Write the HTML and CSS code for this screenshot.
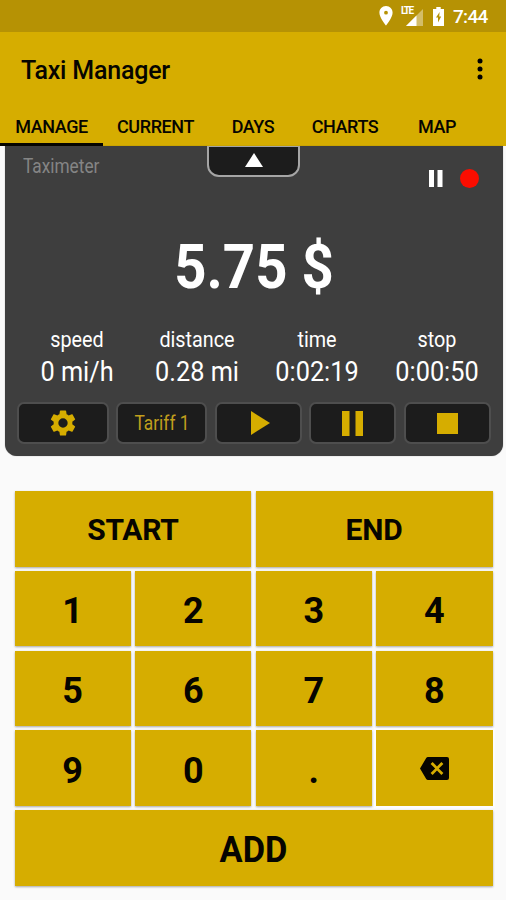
FILE: index.html
```html
<!DOCTYPE html>
<html lang="en">
<head>
<meta charset="utf-8">
<title>Taxi Manager</title>
<link rel="stylesheet" href="styles.css">
</head>
<body>
<div class="status">
  <svg class="pin" viewBox="0 0 14 20"><path fill-rule="evenodd" d="M7 0C3.100 0 .4 3 .4 6.700C.4 11.500 7 19.500 7 19.500S13.600 11.500 13.600 6.700C13.600 3 10.900 0 7 0ZM7 4.800a1.900 1.900 0 1 1 0 3.800a1.900 1.900 0 1 1 0-3.800Z"/></svg>
  <div class="signal"><span class="lte">LTE</span><svg viewBox="0 0 17 17"><path opacity=".4" d="M17 0V17H0Z"/><path d="M10.500 6.500V17H0Z"/></svg></div>
  <svg class="battery" viewBox="0 0 11 19"><path fill-rule="evenodd" d="M3.300 0H7.700V2H11V19H0V2H3.300ZM6.600 5L3 10.500H5V15.500L8.200 9.500H6.200Z"/></svg>
  <span class="clock">7:44</span>
</div>
<header class="bar">
  <h1>Taxi Manager</h1>
  <svg class="more" viewBox="0 0 6 22"><circle cx="3" cy="3" r="2.500"/><circle cx="3" cy="11" r="2.500"/><circle cx="3" cy="19" r="2.500"/></svg>
</header>
<nav class="tabs">
  <a class="tab active">MANAGE</a><a class="tab">CURRENT</a><a class="tab">DAYS</a><a class="tab">CHARTS</a><a class="tab">MAP</a>
</nav>
<section class="meter">
  <div class="top">
    <span class="caption">Taximeter</span>
    <button class="handle"><svg viewBox="0 0 18 14"><path d="M9 0L18 14H0Z"/></svg></button>
    <div class="state"><svg viewBox="0 0 14 18"><path d="M0 0H5V17H0ZM8.500 0H13.500V17H8.500Z"/></svg><i class="rec"></i></div>
  </div>
  <div class="fare">5.75 $</div>
  <div class="stats">
    <div><span class="label">speed</span><span class="value">0 mi/h</span></div>
    <div><span class="label">distance</span><span class="value">0.28 mi</span></div>
    <div><span class="label">time</span><span class="value">0:02:19</span></div>
    <div><span class="label">stop</span><span class="value">0:00:50</span></div>
  </div>
  <div class="controls">
    <button><svg class="gear" viewBox="2 2 20 20"><path d="M19.140 12.940c.04-.3.060-.61.060-.94 0-.32-.02-.64-.07-.94l2.030-1.580c.18-.14.230-.41.120-.61l-1.920-3.320c-.12-.22-.37-.29-.59-.22l-2.390.96c-.5-.38-1.030-.7-1.620-.94L14.400 2.810c-.04-.24-.24-.41-.48-.41h-3.840c-.24 0-.43.170-.47.410L9.250 5.350C8.660 5.590 8.120 5.920 7.630 6.290L5.240 5.330c-.22-.08-.47 0-.59.220L2.740 8.870c-.12.210-.08.470.12.610l2.030 1.580c-.05.300-.09.630-.09.940s.02.640.07.940l-2.030 1.580c-.18.140-.23.410-.12.610l1.920 3.320c.12.220.37.290.59.220l2.390-.96c.5.380 1.030.7 1.620.94l.36 2.540c.05.240.24.410.48.410h3.840c.24 0 .44-.17.470-.41l.36-2.540c.59-.24 1.130-.56 1.620-.94l2.390.96c.22.080.47 0 .59-.22l1.920-3.320c.12-.22.070-.47-.12-.61zM12 15.600a3.600 3.600 0 1 1 0-7.200a3.600 3.600 0 1 1 0 7.200z"/></svg></button>
    <button><span class="tariff">Tariff 1</span></button>
    <button><svg class="play" viewBox="0 0 19 24"><path d="M0 0L19 12L0 24Z"/></svg></button>
    <button><svg class="pause" viewBox="0 0 21 25"><path d="M0 0H7.500V25H0ZM13.500 0H21V25H13.500Z"/></svg></button>
    <button><svg class="stop" viewBox="0 0 21 21"><path d="M0 0H21V21H0Z"/></svg></button>
  </div>
</section>
<main class="keypad">
  <button class="half">START</button><button class="half">END</button>
  <button>1</button><button>2</button><button>3</button><button>4</button>
  <button>5</button><button>6</button><button>7</button><button>8</button>
  <button>9</button><button>0</button><button>.</button>
  <button class="flat"><svg viewBox="0 0 29 23"><path fill-rule="evenodd" d="M8 0H27Q29 0 29 2V21Q29 23 27 23H8Q6.900 23 6.200 22L0 11.500L6.200 1Q6.900 0 8 0ZM12.600 4.900L10.600 6.900L15.200 11.500L10.600 16.100L12.600 18.100L17 13.500L21.400 18.100L23.400 16.100L18.800 11.500L23.400 6.900L21.400 4.900L17 9.500Z"/></svg></button>
  <button class="wide"><span>ADD</span></button>
</main>
</body>
</html>
```
FILE: styles.css
```css
* { box-sizing: border-box; }
body { margin: 0; height: 900px; overflow: hidden; background: #fafafa; font-family: Roboto, sans-serif; color: #060500; }
button { font: inherit; color: inherit; margin: 0; padding: 0; border: 0; display: flex; align-items: center; justify-content: center; }
h1 { margin: 0; }
svg { display: block; }

.status { height: 32px; background: #b69204; color: #fff; display: flex; align-items: center; padding: 0 18px 0 379px; fill: #fff; }
.pin { width: 14px; height: 20px; }
.signal { position: relative; width: 22px; height: 19px; margin-left: 8px; }
.signal svg { width: 17px; height: 17px; margin: 2px 0 0 5px; }
.lte { position: absolute; left: 0; top: -1px; font-size: 10px; line-height: 9px; font-weight: 700; letter-spacing: -1.500px; }
.battery { width: 11px; height: 19px; margin-left: 10px; }
.clock { font-size: 19px; font-weight: 500; line-height: 32px; margin-left: 9px; padding-top: 2px; letter-spacing: -.7px; }

.bar { height: 76px; background: #d6ad00; display: flex; align-items: center; justify-content: space-between; padding: 0 23px 0 21px; }
h1 { font-size: 25px; font-weight: 500; line-height: 30px; letter-spacing: -.2px; padding-top: 2px; }
.more { width: 6px; height: 22px; margin-top: -2px; }

.tabs { height: 38px; background: #d6ad00; display: grid; grid-template-columns: 103px 105px 90px 94px 90px; }
.tab { text-align: center; font-size: 18px; font-weight: 500; line-height: 37px; letter-spacing: -.4px; }
.active { box-shadow: inset 0 -3px #060500; }

.meter { height: 310px; margin: 0 3px 0 5px; padding: 0 12px; background: #3e3e3e; border-radius: 0 0 12px 12px; box-shadow: 0 0 1px #0008; color: #fff; }
.top { height: 83px; display: grid; grid-template-columns: 190px 93px 1fr; align-items: start; }
.caption { font-size: 19.500px; line-height: 22px; color: #858585; padding: 10px 0 0 6px; transform: scaleX(.885); transform-origin: 6px 0; }
.handle { height: 31px; background: #1c1c1c; border: 2px solid #a5a5a5; border-top-width: 1px; border-radius: 0 0 12px 12px; fill: #fff; align-items: flex-start; padding-top: 6px; }
.handle svg { width: 18px; height: 14px; }
.state { display: flex; justify-content: flex-end; align-items: center; padding: 23px 12px 0 0; gap: 17px; fill: #fff; }
.state svg { width: 14px; height: 18px; }
.rec { width: 19px; height: 19px; border-radius: 50%; background: #fb0d00; }
.fare { height: 97px; text-align: center; font-size: 62px; font-weight: 700; line-height: 76px; transform: scaleX(.908); }
.stats { height: 76px; display: grid; grid-template-columns: repeat(4, 120px); text-align: center; margin-left: -.5px; }
.stats span { display: block; white-space: nowrap; transform: scaleX(.92); }
.label { font-size: 21.500px; line-height: 28px; }
.value { font-size: 27.500px; line-height: 35px; }
.controls { display: grid; grid-template-columns: 92px 91px 87px 87px 87px; justify-content: space-between; height: 42px; margin: 0 .5px 0 -.5px; }
.controls button { background: #1c1c1c; border: 2px solid #4e4e4e; border-radius: 7px; fill: #d6ad00; color: #c19f1c; }
.tariff { font-size: 19.500px; transform: scaleX(.89); }
.gear { width: 26px; height: 28px; }
.play { width: 19px; height: 24px; margin-left: 4px; }
.pause { width: 21px; height: 25px; }
.stop { width: 21px; height: 21px; }

.keypad { margin: 35px 13.500px 0 14.500px; display: grid; grid-template-columns: repeat(4, 1fr); grid-auto-rows: 75.500px; gap: 4.300px; font-size: 36px; font-weight: 700; fill: #060500; }
.keypad button { background: #d6ad00; box-shadow: 0 1px 2px #0005; padding-top: 5px; }
.keypad .half { grid-column: span 2; font-size: 30px; letter-spacing: -.2px; padding-top: 2px; }
.keypad .wide { grid-column: 1 / -1; }
.wide span { transform: scaleX(.955); }
.keypad .flat { box-shadow: 0 0 0 2px #fff8; padding-top: 0; }
.flat svg { width: 29px; height: 23px; }
```
